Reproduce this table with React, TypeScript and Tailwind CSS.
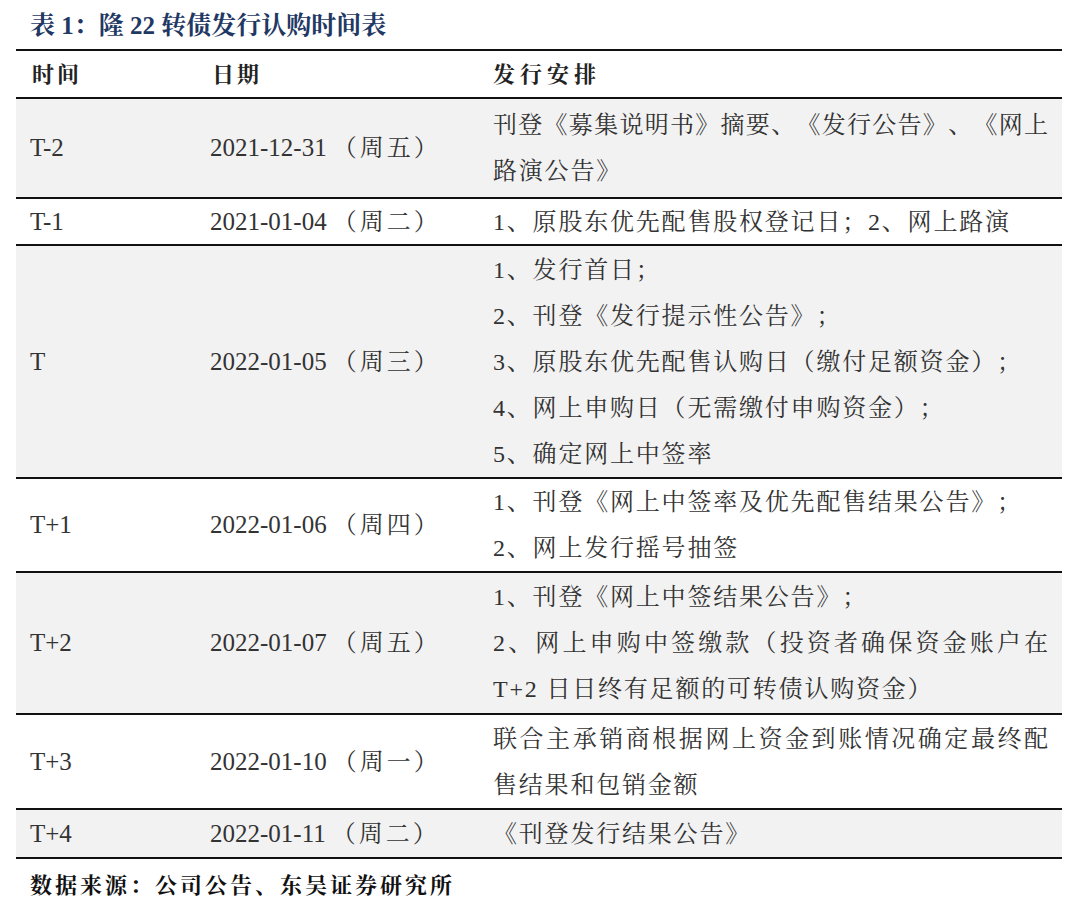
type Line = { text: string; justify?: boolean }

type Row = {
  label: string
  date: string
  week: string
  lines: Line[]
  height: string
  grey: boolean
}

const rows: Row[] = [
  {
    label: "T-2",
    date: "2021-12-31",
    week: "（周五）",
    lines: [{ text: "刊登《募集说明书》摘要、《发行公告》、《网上", justify: true }, { text: "路演公告》" }],
    height: "h-[100px]",
    grey: true,
  },
  {
    label: "T-1",
    date: "2021-01-04",
    week: "（周二）",
    lines: [{ text: "1、原股东优先配售股权登记日；2、网上路演" }],
    height: "h-[47px]",
    grey: false,
  },
  {
    label: "T",
    date: "2022-01-05",
    week: "（周三）",
    lines: [
      { text: "1、发行首日；" },
      { text: "2、刊登《发行提示性公告》；" },
      { text: "3、原股东优先配售认购日（缴付足额资金）；" },
      { text: "4、网上申购日（无需缴付申购资金）；" },
      { text: "5、确定网上中签率" },
    ],
    height: "h-[233px]",
    grey: true,
  },
  {
    label: "T+1",
    date: "2022-01-06",
    week: "（周四）",
    lines: [{ text: "1、刊登《网上中签率及优先配售结果公告》；" }, { text: "2、网上发行摇号抽签" }],
    height: "h-[94px]",
    grey: false,
  },
  {
    label: "T+2",
    date: "2022-01-07",
    week: "（周五）",
    lines: [
      { text: "1、刊登《网上中签结果公告》；" },
      { text: "2、网上申购中签缴款（投资者确保资金账户在", justify: true },
      { text: "T+2 日日终有足额的可转债认购资金）" },
    ],
    height: "h-[142px]",
    grey: true,
  },
  {
    label: "T+3",
    date: "2022-01-10",
    week: "（周一）",
    lines: [{ text: "联合主承销商根据网上资金到账情况确定最终配", justify: true }, { text: "售结果和包销金额" }],
    height: "h-[95px]",
    grey: false,
  },
  {
    label: "T+4",
    date: "2022-01-11",
    week: "（周二）",
    lines: [{ text: "《刊登发行结果公告》" }],
    height: "h-[49px]",
    grey: true,
  },
]

const serif = "font-['Liberation_Serif','Noto_Serif_CJK_SC','Noto_Sans_CJK_SC',serif]"

export default function App() {
  return (
    <div
      lang="zh-CN"
      className={`w-[1080px] h-[904px] bg-white ${serif} text-[#333333] [text-spacing-trim:space-all]`}
    >
      {/* title */}
      <div className="h-[49px] pl-[30px] pt-[9px] text-[25px] leading-[34px] font-bold text-[#1f3864]">
        表 1：隆 22 转债发行认购时间表
      </div>

      <div className="ml-[16px] w-[1046px] border-t-2 border-[#111]">
        {/* header */}
        <div className="flex h-[48px] items-center border-b-2 border-[#111] bg-white text-[22px] font-bold text-[#222]">
          <div className="w-[180px] pl-[16px] tracking-[3px]">时间</div>
          <div className="w-[283px] pl-[16px] tracking-[3px]">日期</div>
          <div className="pl-[14px] tracking-[5px]">发行安排</div>
        </div>

        {rows.map((row) => (
          <div
            key={row.label}
            className={`flex ${row.height} items-center border-b-2 border-[#111] text-[24px] ${row.grey ? "bg-[#f2f2f2]" : "bg-white"}`}
          >
            <div className="w-[180px] pl-[14px] text-[25px] leading-[46px]">{row.label}</div>
            <div className="w-[283px] pl-[14px] leading-[46px] whitespace-nowrap">
              <span className="text-[25px]">{row.date}</span>
              <span className="ml-[6px] tracking-[3px]">{row.week}</span>
            </div>
            <div className="w-[583px] px-[14px]">
              {row.lines.map((line, i) => (
                <div
                  key={i}
                  className={`leading-[46px] ${
                    line.justify
                      ? "text-justify [text-align-last:justify]"
                      : "whitespace-nowrap tracking-[1.8px]"
                  }`}
                >
                  {line.text}
                </div>
              ))}
            </div>
          </div>
        ))}
      </div>

      {/* source */}
      <div className="pl-[30px] pt-[12px] text-[22px] leading-[30px] font-bold tracking-[3px] text-[#111]">
        数据来源：公司公告、东吴证券研究所
      </div>
    </div>
  )
}
